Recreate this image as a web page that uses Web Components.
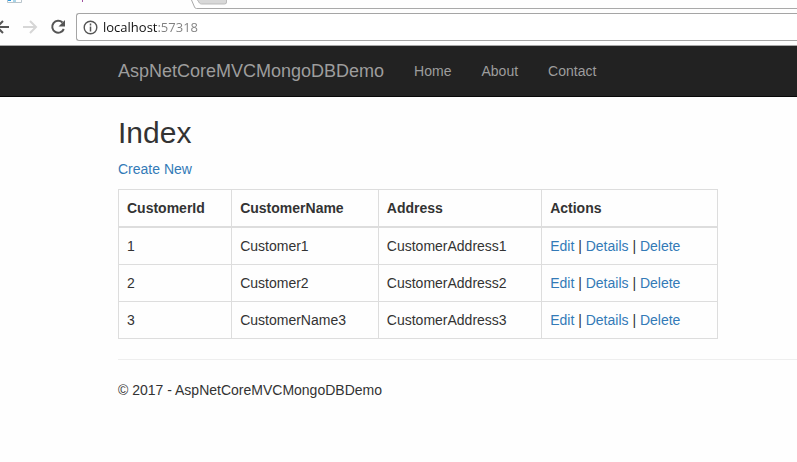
<!DOCTYPE html>
<html lang="en">
<head>
<meta charset="utf-8">
<title>Index - AspNetCoreMVCMongoDBDemo</title>
<style>
body { margin: 0; background: #fefefe; color: #333; font: 14px/20px "Liberation Sans", Arial, sans-serif; }
</style>
</head>
<body>
<browser-chrome address="localhost:57318"></browser-chrome>
<site-navbar>
  <nav-link slot="brand" brand href="#/">AspNetCoreMVCMongoDBDemo</nav-link>
  <nav-link href="#/home">Home</nav-link>
  <nav-link href="#/about">About</nav-link>
  <nav-link href="#/contact">Contact</nav-link>
</site-navbar>
<page-content heading="Index">
  <customer-table></customer-table>
  <span slot="footer">© 2017 - AspNetCoreMVCMongoDBDemo</span>
</page-content>

<script>
class BrowserChrome extends HTMLElement {
  connectedCallback() {
    this.attachShadow({ mode: "open" }).innerHTML = `
<style>
:host { display: block; border-bottom: 1px solid #a8a8a8; }
.tabs { display: flex; height: 9px; }
.tabs svg { flex: none; display: block; }
.strip { flex: 1; box-sizing: border-box; border-bottom: 1px solid #a9a9a9; }
.bar { display: flex; align-items: center; padding: 4px 0; overflow: hidden; }
button { flex: none; width: 28px; height: 20px; padding: 0; border: 0; background: none; }
button svg { display: block; }
button:first-child { width: 20px; }
label { flex: 1; display: flex; align-items: center; gap: 5px; height: 26px; padding-left: 6px; border: 1px solid #a5a5a5; border-right: 0; border-radius: 3px 0 0 3px; background: #fff; }
label svg { flex: none; }
input { flex: 1; min-width: 0; border: 0; padding: 0; outline: 0; height: 20px; font: 13px/20px "Open Sans", sans-serif;
  background: linear-gradient(90deg, #111 55px, #808080 55px); -webkit-background-clip: text; background-clip: text; color: transparent; }
</style>
<div class="tabs">
  <svg width="230" height="9" viewBox="0 0 230 9" fill="none">
    <path d="M7.500 0V2.500H21.500V0" stroke="#b9c5cc"/><path d="M8 0h3v1h-3z" fill="#2b9be0"/><path d="M13 0h3v2h-3z" fill="#a9d5e9"/>
    <path d="M82 0h1v2h-1z" fill="#a050a0"/>
    <path d="M197 0h30v2q0 2-2 2h-23q-2 0-3-1z" fill="#d8d8d8"/><path d="M197.500 0l2 3q1 1 2 1h23q2 0 2-2V0" stroke="#bbb"/>
    <path d="M191.500 0l3 7q.5 1.500 2 1.500H230" stroke="#a9a9a9"/>
  </svg>
  <div class="strip"></div>
</div>
<div class="bar">
  <button aria-label="Back"><svg width="20" height="20" fill="none" stroke="#555" stroke-width="2"><path d="M9 10H-4M3 4l-6 6 6 6"/></svg></button>
  <button aria-label="Forward"><svg width="28" height="20" fill="none" stroke="#d6d6d6" stroke-width="2"><path d="M3 10h13M10 4l6 6-6 6"/></svg></button>
  <button aria-label="Reload"><svg width="28" height="20" fill="none"><path d="M14.500 5.500A6 6 0 1 0 15.800 12" stroke="#555" stroke-width="2"/><path d="M17 3v6.500h-6.500z" fill="#555"/></svg></button>
  <label><svg width="15" height="15" fill="none" stroke="#555" role="img" aria-label="Site information"><circle cx="7.500" cy="7.500" r="6.300" stroke-width="1.400"/><path d="M7.500 6.500v5M7.500 3.500v2" stroke-width="1.500"/></svg><input aria-label="Address" type="text" spellcheck="false"></label>
</div>`;
    this.shadowRoot.querySelector("input").value = this.getAttribute("address");
  }
}

class SiteNavbar extends HTMLElement {
  connectedCallback() {
    this.attachShadow({ mode: "open" }).innerHTML = `
<style>
:host { display: block; background: #222; border-bottom: 1px solid #080808; }
nav { display: flex; flex-wrap: wrap; gap: 30px; padding: 15px 16px 15px 118px; }
</style>
<nav><slot name="brand"></slot><slot></slot></nav>`;
  }
}

class NavLink extends HTMLElement {
  connectedCallback() {
    this.attachShadow({ mode: "open" }).innerHTML = `
<style>
:host { display: block; }
:host([brand]) { font-size: 18px; }
a { color: #9d9d9d; text-decoration: none; }
a:hover { color: #fff; }
</style>
<a href="${this.getAttribute("href")}"><slot></slot></a>`;
  }
}

class PageContent extends HTMLElement {
  connectedCallback() {
    this.attachShadow({ mode: "open" }).innerHTML = `
<style>
:host { display: block; padding: 19px 0 0 118px; }
h2 { margin: 0 0 10px; font-size: 30px; line-height: 33px; font-weight: 400; }
p { margin: 0 0 10px; }
a { color: #337ab7; text-decoration: none; }
hr { margin: 20px 0; border: 0; border-top: 1px solid #eee; }
footer { padding-bottom: 20px; }
</style>
<main><h2>${this.getAttribute("heading")}</h2>
<p><a href="#/create">Create New</a></p>
<slot></slot></main>
<hr>
<footer><slot name="footer"></slot></footer>`;
  }
}

class CustomerTable extends HTMLElement {
  connectedCallback() {
    const rows = [
      [1, "Customer1", "CustomerAddress1"],
      [2, "Customer2", "CustomerAddress2"],
      [3, "CustomerName3", "CustomerAddress3"]
    ];
    this.attachShadow({ mode: "open" }).innerHTML = `
<style>
:host { display: block; max-width: 600px; }
table { width: 100%; border-collapse: collapse; color: #333; }
th, td { padding: 8px; border: 1px solid #ddd; text-align: left; }
th { border-bottom-width: 2px; }
a { color: #337ab7; text-decoration: none; }
</style>
<table>
<thead><tr><th>CustomerId</th><th>CustomerName</th><th>Address</th><th>Actions</th></tr></thead>
<tbody>${rows.map(([id, name, address]) => `<tr><td>${id}</td><td>${name}</td><td>${address}</td><td><a href="#/edit/${id}">Edit</a> | <a href="#/details/${id}">Details</a> | <a href="#/delete/${id}">Delete</a></td></tr>`).join("")}</tbody>
</table>`;
  }
}

customElements.define("browser-chrome", BrowserChrome);
customElements.define("nav-link", NavLink);
customElements.define("site-navbar", SiteNavbar);
customElements.define("customer-table", CustomerTable);
customElements.define("page-content", PageContent);
</script>
</body>
</html>
